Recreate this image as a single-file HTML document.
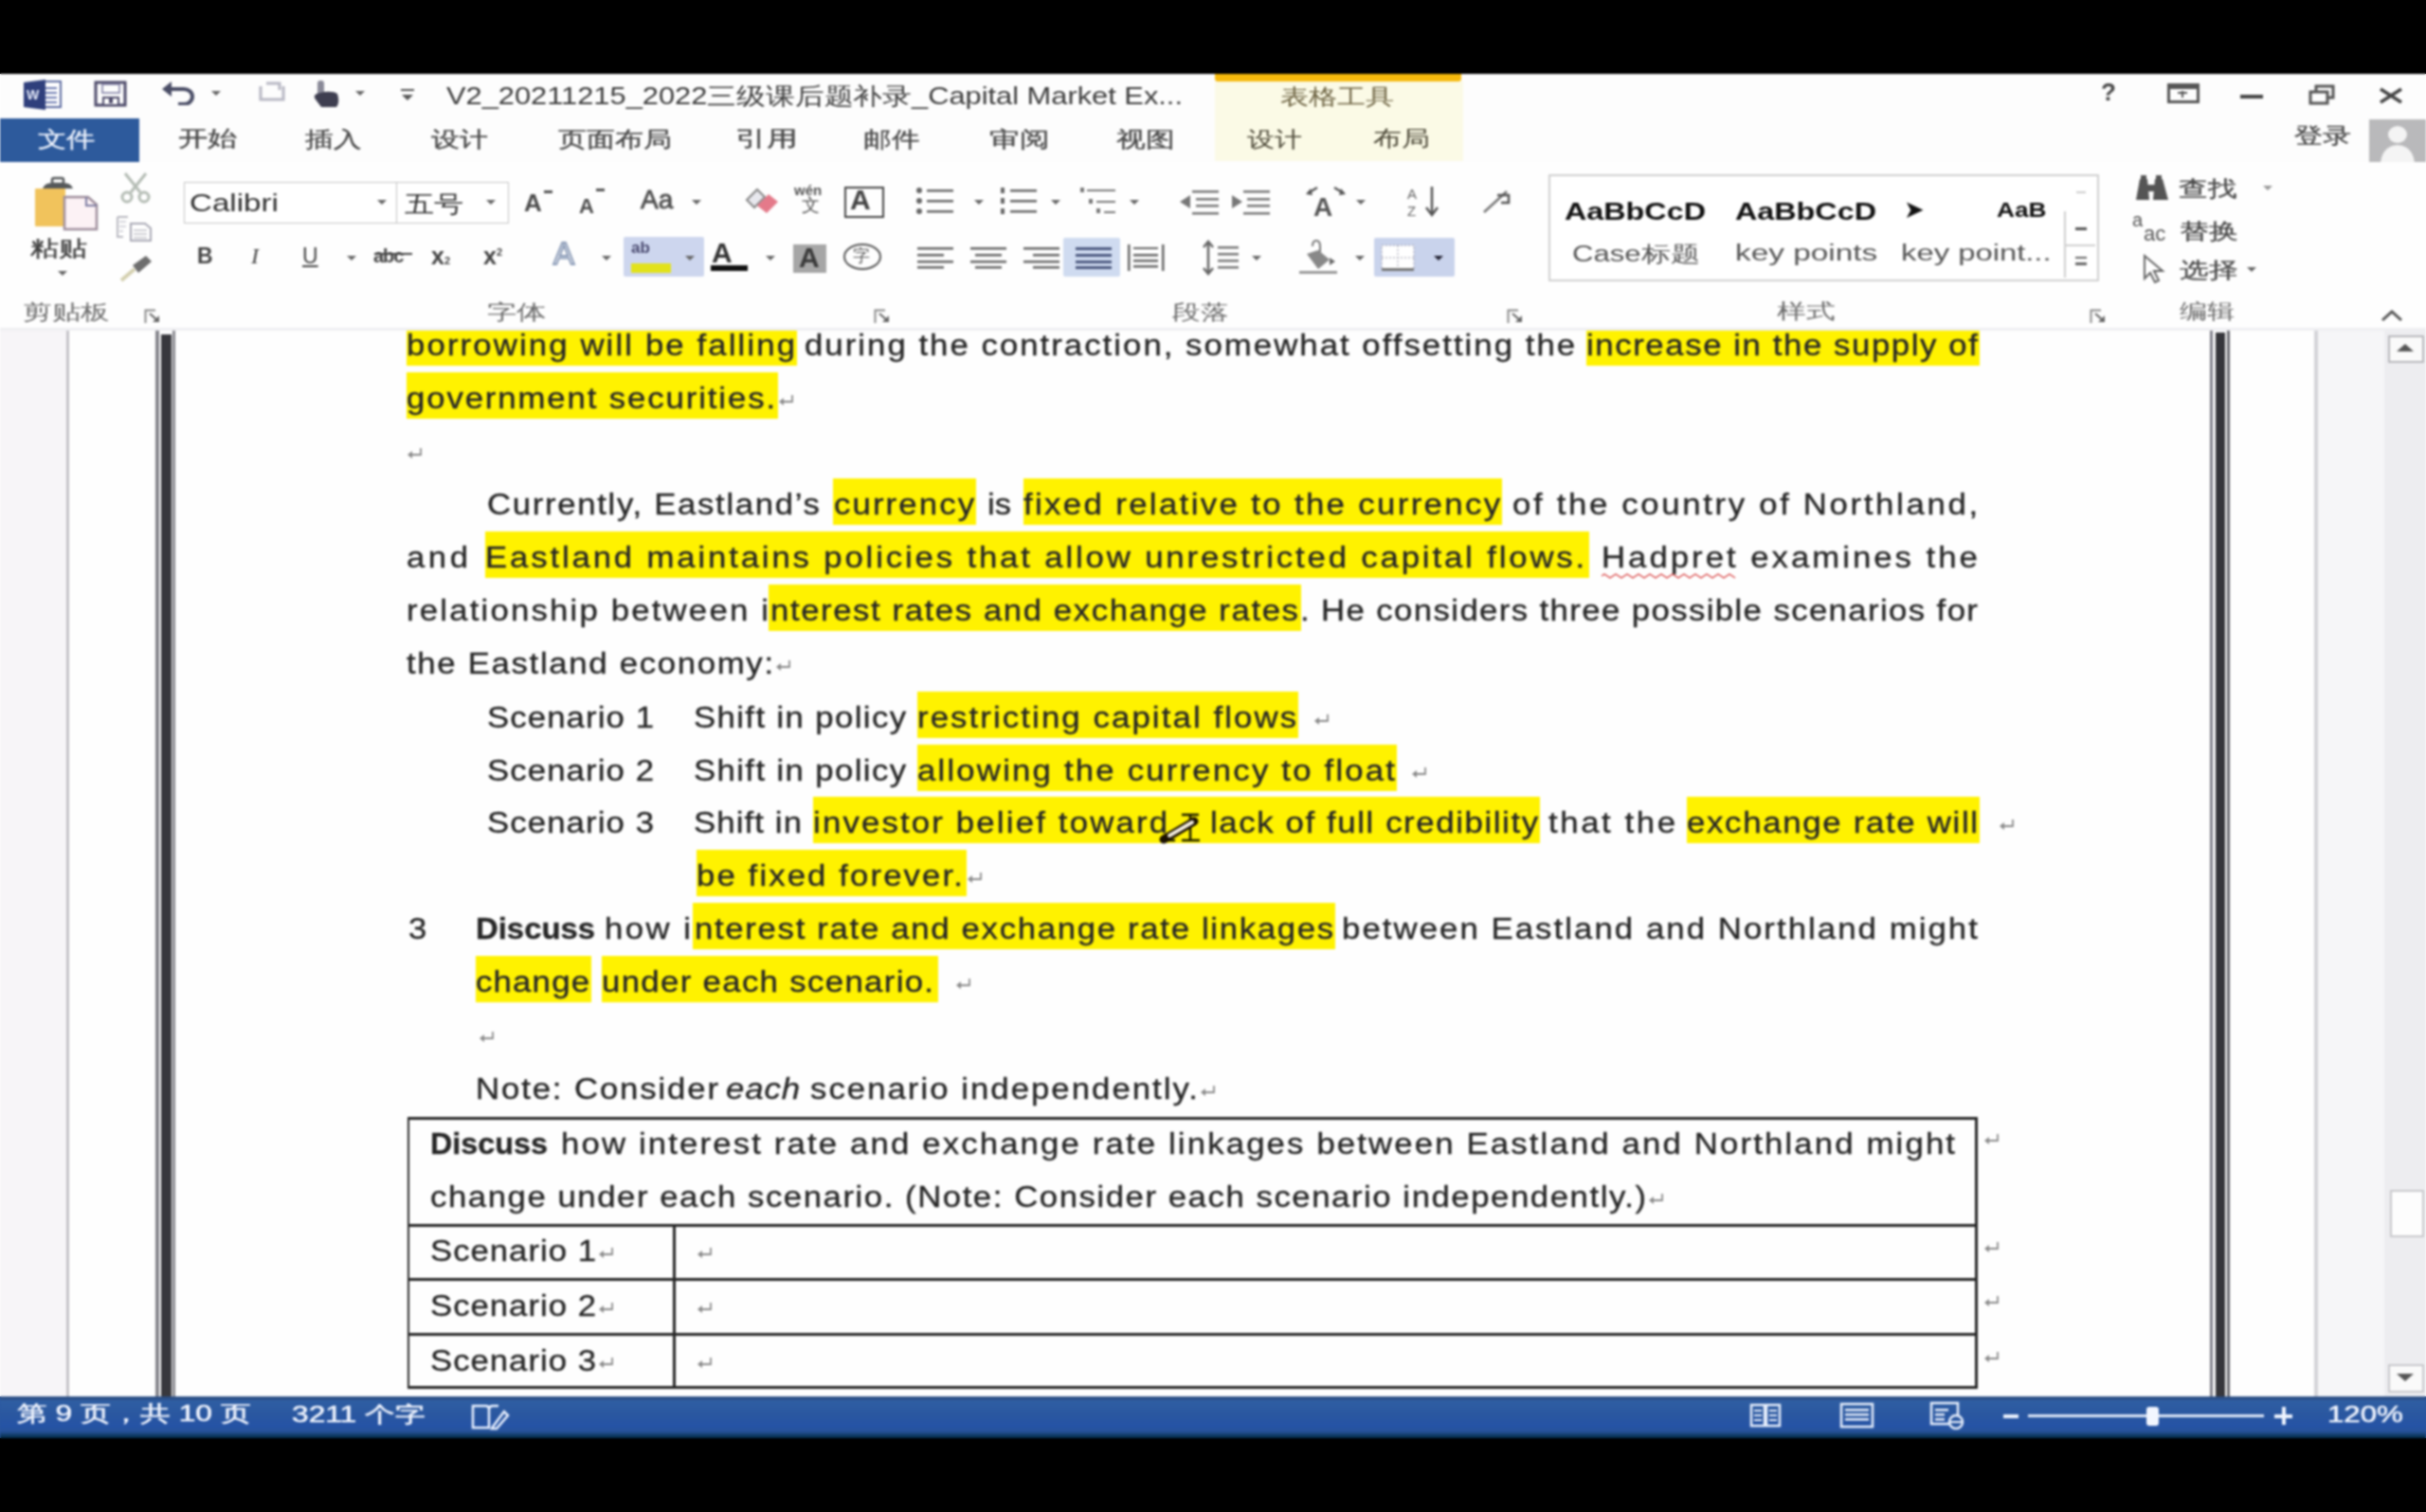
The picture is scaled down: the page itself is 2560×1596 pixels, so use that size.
<!DOCTYPE html>
<html><head><meta charset="utf-8"><style>
*{margin:0;padding:0;box-sizing:content-box}
html,body{width:2560px;height:1596px;overflow:hidden;background:linear-gradient(#000 0,#000 78px,#fff 78px,#fff 1474px,#2a57a0 1474px,#2a57a0 1518px,#000 1518px,#000 1596px)}
body{position:relative;font-family:"Liberation Sans",sans-serif}
.a{position:absolute}
.cn{white-space:nowrap;line-height:36px}
.tab{top:128px;font-size:23px;color:#444;letter-spacing:13px}
.grp{top:311px;font-size:22px;color:#666;letter-spacing:8px}
.launch{top:327px;width:16px;height:12px;border-left:2px solid #999;border-top:2px solid #999}
.launch:after{content:"";position:absolute;left:6px;top:4px;width:8px;height:6px;background:#777;transform:skewX(30deg)}
.dd{width:0;height:0;border-left:5px solid transparent;border-right:5px solid transparent;border-top:5px solid #666;margin-left:1px}
.sty{top:206px;font-size:24px;font-weight:bold;color:#111;line-height:34px;letter-spacing:1.5px}
.st{top:1477px;font-size:24px;color:#eef3ff;line-height:36px;white-space:nowrap}
.hl{height:49px;background:#fff200}
.tx{font-size:31px;line-height:40px;color:#262626;white-space:pre;transform-origin:0 0;-webkit-text-stroke:0.35px #262626}
.pil{width:16px;height:14px;border-right:2px solid #aaa;border-bottom:2px solid #aaa;transform:scale(.8)}
</style></head>
<body>
<div id="wrap" style="position:absolute;left:0;top:0;width:2560px;height:1596px;overflow:hidden;background:#000;filter:blur(1px)">
<!-- title bar -->
<div class="a" style="left:0;top:78px;width:2560px;height:93px;background:#fdfdfd"></div>
<div class="a" style="left:1282px;top:78px;width:260px;height:8px;background:#f6b90c;border-radius:0 0 3px 3px"></div>
<div class="a" style="left:1282px;top:86px;width:262px;height:84px;background:#fbfae6"></div>
<!-- word icon -->
<svg class="a" style="left:24px;top:83px" width="44" height="34" viewBox="0 0 44 34">
 <rect x="18" y="3" width="22" height="27" fill="#fff" stroke="#5b6aa0" stroke-width="2"/>
 <rect x="22" y="9" width="14" height="2" fill="#6b7ab0"/><rect x="22" y="14" width="14" height="2" fill="#6b7ab0"/><rect x="22" y="19" width="14" height="2" fill="#6b7ab0"/><rect x="22" y="24" width="14" height="2" fill="#6b7ab0"/>
 <path d="M1 4 L24 1 L24 33 L1 30 Z" fill="#2f3f7c"/>
 <text x="4" y="22" font-family="Liberation Sans" font-weight="bold" font-size="14" fill="#e8eefc">W</text>
</svg>
<!-- save -->
<svg class="a" style="left:99px;top:85px" width="36" height="28" viewBox="0 0 36 28">
 <path d="M2 2 H33 V26 H2 Z" fill="none" stroke="#4d4a6a" stroke-width="3"/>
 <rect x="9" y="4" width="18" height="9" fill="none" stroke="#7a78a0" stroke-width="1.5"/>
 <rect x="10" y="18" width="16" height="8" fill="#fff" stroke="#4d4a6a" stroke-width="2"/>
 <rect x="16" y="19" width="4" height="5" fill="#4d4a6a"/>
</svg>
<!-- undo -->
<svg class="a" style="left:170px;top:85px" width="40" height="26" viewBox="0 0 40 26">
 <path d="M6 9 H24 A9 8 0 0 1 24 25 H18" fill="none" stroke="#4a4d66" stroke-width="4"/>
 <path d="M1 9 L11 1 L11 17 Z" fill="#4a4d66"/>
</svg>
<div class="a dd" style="left:222px;top:96px"></div>
<!-- redo gray -->
<svg class="a" style="left:271px;top:85px" width="34" height="24" viewBox="0 0 34 24">
 <path d="M4 6 V20 H28 V6" fill="none" stroke="#b8b8c4" stroke-width="3"/><path d="M10 3 H24 L24 10" fill="none" stroke="#b8b8c4" stroke-width="3"/>
</svg>
<!-- touch -->
<svg class="a" style="left:328px;top:83px" width="34" height="32" viewBox="0 0 34 32"><rect x="7" y="2" width="7" height="17" rx="3" fill="#8a8a98"/><path d="M6 16 Q2 18 5 22 L11 30 H27 Q30 26 29 20 L28 16 Q24 13 14 14 Z" fill="#3e3e50"/></svg>
<div class="a dd" style="left:374px;top:96px"></div>
<svg class="a" style="left:421px;top:92px" width="20" height="16"><rect x="2" y="2" width="14" height="2" fill="#555"/><path d="M3 8 H15 L9 14 Z" fill="#555"/></svg>
<!-- window controls -->
<div class="a" style="left:2217px;top:82px;font-size:26px;font-weight:bold;color:#444;line-height:30px">?</div>
<svg class="a" style="left:2287px;top:88px" width="36" height="22"><rect x="1.5" y="1.5" width="31" height="18" fill="none" stroke="#555" stroke-width="3"/><rect x="2" y="2" width="30" height="4" fill="#555"/><path d="M11 10 H21 M16 8 V15" stroke="#555" stroke-width="2"/></svg>
<div class="a" style="left:2364px;top:100px;width:24px;height:4px;background:#444"></div>
<svg class="a" style="left:2436px;top:89px" width="30" height="22"><rect x="2" y="8" width="18" height="12" fill="none" stroke="#555" stroke-width="3"/><path d="M8 8 V2 H26 V14 H20" fill="none" stroke="#555" stroke-width="3"/></svg>
<svg class="a" style="left:2509px;top:92px" width="28" height="18"><path d="M3 2 L25 16 M25 2 L3 16" stroke="#444" stroke-width="3.5"/></svg>
<!-- tabs -->
<div class="a" style="left:0;top:125px;width:147px;height:46px;background:#2d5a9c"></div>
<svg class="a" style="left:2500px;top:126px" width="60" height="46"><rect width="60" height="46" fill="#b9b9bb"/><ellipse cx="30" cy="16" rx="10" ry="9" fill="#f4f4f4"/><path d="M12 46 Q14 28 30 27 Q46 28 48 46 Z" fill="#f4f4f4"/></svg>

<!-- ribbon bg -->
<div class="a" style="left:0;top:171px;width:2560px;height:176px;background:#fefefe"></div>
<div class="a" style="left:0;top:346px;width:2560px;height:3px;background:#efeff2"></div>
<!-- clipboard -->
<svg class="a" style="left:33px;top:183px" width="72" height="62" viewBox="0 0 72 62">
 <rect x="4" y="16" width="32" height="40" rx="1" fill="#f1c35c"/>
 <path d="M12 16 Q14 10 22 10 H34 Q42 10 44 16 Z" fill="#55585a"/><rect x="22" y="5" width="12" height="6" rx="2" fill="none" stroke="#55585a" stroke-width="2.5"/>
 <path d="M35 25 H60 L69 33 V59 H35 Z" fill="#fcf2f5" stroke="#9e8e9c" stroke-width="2.5"/>
 <path d="M58 25 V34 H69" fill="none" stroke="#7a7aa0" stroke-width="2"/>
</svg>
<div class="a dd" style="left:60px;top:286px"></div>
<svg class="a" style="left:124px;top:181px" width="38" height="34"><path d="M8 2 L24 22 M30 2 L14 22" stroke="#b4bcb4" stroke-width="3"/><circle cx="10" cy="27" r="5" fill="none" stroke="#b4bcb4" stroke-width="3"/><circle cx="28" cy="27" r="5" fill="none" stroke="#b4bcb4" stroke-width="3"/></svg>
<svg class="a" style="left:121px;top:226px" width="42" height="30"><path d="M3 3 H14 M3 3 V24 H9" fill="none" stroke="#b8b8c0" stroke-width="2"/><path d="M5 8 H12 M5 13 H12 M5 18 H9" stroke="#c8c8d0" stroke-width="1.5"/><path d="M17 10 H32 L38 15 V28 H17 Z" fill="#fff" stroke="#a8a8b4" stroke-width="2"/><path d="M20 17 H34 M20 21 H34 M20 25 H34" stroke="#c0c0c8" stroke-width="1.5"/></svg>
<svg class="a" style="left:124px;top:268px" width="40" height="30"><path d="M4 28 L18 16" stroke="#d4d0b0" stroke-width="4"/><path d="M16 12 L30 2 L36 8 L22 20 Z" fill="#6e6e6e"/></svg>
<svg class="a" style="left:152px;top:326px" width="20" height="16"><path d="M1.5 15 V1.5 H12" fill="none" stroke="#8a8a8a" stroke-width="2"/><path d="M6 5 L14 12" stroke="#666" stroke-width="2.2"/><path d="M16 14 L9 14 L16 7 Z" fill="#666"/></svg>
<!-- font group -->
<div class="a" style="left:194px;top:192px;width:223px;height:42px;border:1.5px solid #c4c4c4;background:#fff"></div>
<div class="a" style="left:418px;top:192px;width:117px;height:42px;border:1.5px solid #c4c4c4;background:#fff"></div>
<div class="a dd" style="left:397px;top:211px"></div>
<div class="a dd" style="left:512px;top:211px"></div>
<div class="a" style="left:553px;top:199px;font-size:26px;color:#4a4a4a;line-height:30px;font-weight:bold">A</div><div class="a" style="left:574px;top:201px;width:9px;height:3px;background:#555"></div>
<div class="a" style="left:611px;top:205px;font-size:22px;color:#4a4a4a;line-height:26px;font-weight:bold">A</div><div class="a" style="left:629px;top:199px;width:9px;height:3px;background:#555"></div>
<div class="a" style="left:676px;top:195px;font-size:28px;color:#505050;line-height:32px;-webkit-text-stroke:0.8px #505050">Aa</div><div class="a dd" style="left:729px;top:211px"></div>
<svg class="a" style="left:785px;top:197px" width="38" height="32"><path d="M3 14 L14 3 L22 11 L11 22 Z" fill="#e8e8ee" stroke="#888" stroke-width="2"/><path d="M14 20 L26 8 L36 16 L24 28 Z" fill="#e47a8a"/></svg>
<div class="a" style="left:838px;top:193px;font-size:15px;color:#555;line-height:16px;font-weight:bold">wén</div>
<div class="a cn" style="left:846px;top:205px;font-size:19px;color:#555;line-height:24px">文</div>
<div class="a" style="left:891px;top:197px;width:38px;height:29px;border:2.5px solid #444"></div>
<div class="a" style="left:897px;top:193px;font-size:30px;color:#444;line-height:36px;font-weight:bold">A</div>
<div class="a" style="left:208px;top:252px;font-size:23px;font-weight:bold;color:#444;line-height:36px">B</div>
<div class="a" style="left:265px;top:252px;font-size:24px;font-style:italic;color:#444;line-height:36px;font-family:'Liberation Serif',serif">I</div>
<div class="a" style="left:319px;top:252px;font-size:23px;color:#444;line-height:36px;text-decoration:underline">U</div>
<div class="a dd" style="left:365px;top:270px"></div>
<div class="a" style="left:394px;top:253px;font-size:20px;color:#444;line-height:34px;font-weight:bold;letter-spacing:-1px">abc</div>
<div class="a" style="left:395px;top:267px;width:40px;height:2px;background:#444"></div>
<div class="a" style="left:455px;top:254px;font-size:25px;color:#444;line-height:32px;font-weight:bold">x<span style="font-size:11px">2</span></div>
<div class="a" style="left:510px;top:250px;font-size:25px;color:#444;line-height:32px;font-weight:bold">x<span style="font-size:11px;vertical-align:9px">2</span></div>
<div class="a" style="left:584px;top:250px;font-size:33px;color:#fff;line-height:36px;-webkit-text-stroke:2px #8c9cb8">A</div>
<div class="a dd" style="left:634px;top:270px"></div>
<div class="a" style="left:658px;top:250px;width:85px;height:42px;background:#cdd6ee;border-radius:2px"></div>
<div class="a" style="left:666px;top:250px;font-size:17px;color:#4a4a70;line-height:24px;font-weight:bold">ab</div>
<div class="a" style="left:666px;top:278px;width:42px;height:10px;background:#e2e21a"></div>
<div class="a dd" style="left:722px;top:270px"></div>
<div class="a" style="left:751px;top:250px;font-size:30px;color:#333;line-height:34px;font-weight:bold">A</div>
<div class="a" style="left:750px;top:280px;width:39px;height:6px;background:#111"></div>
<div class="a dd" style="left:807px;top:270px"></div>
<div class="a" style="left:837px;top:258px;width:35px;height:30px;background:#a6a6a6"></div>
<div class="a" style="left:843px;top:254px;font-size:30px;color:#3a3a3a;line-height:36px;font-weight:bold">A</div>
<svg class="a" style="left:889px;top:256px" width="42" height="30"><ellipse cx="21" cy="15" rx="19" ry="13" fill="none" stroke="#555" stroke-width="2"/></svg>
<div class="a cn" style="left:900px;top:256px;font-size:18px;color:#555;line-height:28px">字</div>
<svg class="a" style="left:922px;top:326px" width="20" height="16"><path d="M1.5 15 V1.5 H12" fill="none" stroke="#8a8a8a" stroke-width="2"/><path d="M6 5 L14 12" stroke="#666" stroke-width="2.2"/><path d="M16 14 L9 14 L16 7 Z" fill="#666"/></svg>
<!-- paragraph group -->
<svg class="a" style="left:966px;top:197px" width="44" height="32"><g fill="#666"><circle cx="4" cy="4" r="3"/><circle cx="4" cy="15" r="3"/><circle cx="4" cy="26" r="3"/><rect x="12" y="3" width="28" height="2.5"/><rect x="12" y="14" width="28" height="2.5"/><rect x="12" y="25" width="28" height="2.5"/></g></svg>
<div class="a dd" style="left:1027px;top:211px"></div>
<svg class="a" style="left:1054px;top:197px" width="44" height="32"><g fill="#666"><rect x="2" y="1" width="4" height="6"/><rect x="2" y="12" width="4" height="6"/><rect x="2" y="23" width="4" height="6"/><rect x="12" y="3" width="28" height="2.5"/><rect x="12" y="14" width="28" height="2.5"/><rect x="12" y="25" width="28" height="2.5"/></g></svg>
<div class="a dd" style="left:1108px;top:211px"></div>
<svg class="a" style="left:1139px;top:197px" width="44" height="32"><g fill="#777"><rect x="1" y="1" width="4" height="5"/><rect x="8" y="3" width="30" height="2"/><rect x="10" y="13" width="4" height="5"/><rect x="18" y="15" width="20" height="2"/><rect x="18" y="23" width="4" height="5"/><rect x="26" y="26" width="12" height="2"/></g></svg>
<div class="a dd" style="left:1191px;top:211px"></div>
<svg class="a" style="left:1244px;top:199px" width="44" height="30"><g fill="#777"><rect x="14" y="2" width="28" height="2.5"/><rect x="18" y="10" width="24" height="2.5"/><rect x="18" y="17" width="24" height="2.5"/><rect x="14" y="25" width="28" height="2.5"/><path d="M1 14 L12 7 V21 Z"/></g></svg>
<svg class="a" style="left:1298px;top:199px" width="44" height="30"><g fill="#777"><rect x="14" y="2" width="28" height="2.5"/><rect x="18" y="10" width="24" height="2.5"/><rect x="18" y="17" width="24" height="2.5"/><rect x="14" y="25" width="28" height="2.5"/><path d="M13 14 L2 7 V21 Z"/></g></svg>
<svg class="a" style="left:1377px;top:195px" width="44" height="36"><text x="9" y="33" font-family="Liberation Sans" font-weight="bold" font-size="28" fill="#555">A</text><path d="M3 9 L13 3 M31 3 L41 9" stroke="#555" stroke-width="2.5"/><path d="M1 10 L6 4 L8 11 Z M43 10 L38 4 L36 11 Z" fill="#555"/></svg>
<div class="a dd" style="left:1430px;top:211px"></div>
<svg class="a" style="left:1484px;top:195px" width="40" height="36"><text x="1" y="15" font-family="Liberation Sans" font-size="15" fill="#666">A</text><text x="1" y="33" font-family="Liberation Sans" font-size="15" fill="#666">Z</text><path d="M27 2 V30 M21 24 L27 32 L33 24" stroke="#555" stroke-width="2.5" fill="none"/></svg>
<svg class="a" style="left:1562px;top:196px" width="34" height="34"><path d="M4 28 L28 6" stroke="#777" stroke-width="2.5"/><path d="M18 10 H30 V18 H22" stroke="#555" stroke-width="2.5" fill="none"/></svg>
<svg class="a" style="left:966px;top:259px" width="44" height="26"><g fill="#666"><rect x="2" y="2" width="38" height="2.5"/><rect x="2" y="9" width="28" height="2.5"/><rect x="2" y="16" width="38" height="2.5"/><rect x="2" y="22" width="28" height="2.5"/></g></svg>
<svg class="a" style="left:1022px;top:259px" width="44" height="26"><g fill="#666"><rect x="2" y="2" width="38" height="2.5"/><rect x="7" y="9" width="28" height="2.5"/><rect x="2" y="16" width="38" height="2.5"/><rect x="7" y="22" width="28" height="2.5"/></g></svg>
<svg class="a" style="left:1078px;top:259px" width="44" height="26"><g fill="#666"><rect x="2" y="2" width="38" height="2.5"/><rect x="12" y="9" width="28" height="2.5"/><rect x="2" y="16" width="38" height="2.5"/><rect x="12" y="22" width="28" height="2.5"/></g></svg>
<div class="a" style="left:1122px;top:251px;width:60px;height:41px;background:#cfdbf0;border-radius:2px"></div>
<svg class="a" style="left:1133px;top:259px" width="44" height="26"><g fill="#4d5a80"><rect x="2" y="2" width="38" height="3"/><rect x="2" y="9" width="38" height="3"/><rect x="2" y="16" width="38" height="3"/><rect x="2" y="22" width="38" height="3"/></g></svg>
<svg class="a" style="left:1188px;top:256px" width="44" height="32"><g fill="#666"><rect x="2" y="2" width="2.5" height="28"/><rect x="38" y="2" width="2.5" height="28"/><rect x="8" y="12" width="26" height="2.5"/><rect x="8" y="18" width="26" height="2.5"/><rect x="8" y="24" width="26" height="2.5"/><path d="M8 6 H34" stroke="#666" stroke-width="2"/></g></svg>
<svg class="a" style="left:1267px;top:252px" width="42" height="40"><path d="M8 4 V36 M3 9 L8 3 L13 9 M3 31 L8 37 L13 31" stroke="#666" stroke-width="2.5" fill="none"/><g fill="#777"><rect x="18" y="8" width="22" height="2.5"/><rect x="18" y="15" width="22" height="2.5"/><rect x="18" y="22" width="22" height="2.5"/><rect x="18" y="29" width="22" height="2.5"/></g></svg>
<div class="a dd" style="left:1320px;top:270px"></div>
<svg class="a" style="left:1369px;top:252px" width="48" height="40"><path d="M16 8 Q16 2 20 2 Q24 2 24 8 V14" stroke="#777" stroke-width="2" fill="none"/><path d="M10 16 L22 12 L34 22 L22 32 Z" fill="#888"/><path d="M34 20 L40 24 L34 28 Z" fill="#666"/><rect x="2" y="34" width="40" height="3" fill="#999"/></svg>
<div class="a dd" style="left:1429px;top:270px"></div>
<div class="a" style="left:1450px;top:251px;width:85px;height:41px;background:#c9d3ec;border-radius:2px"></div>
<svg class="a" style="left:1456px;top:257px" width="40" height="30"><rect x="2" y="2" width="34" height="26" fill="#fff" stroke="#99a" stroke-width="1" stroke-dasharray="2 2"/><path d="M19 2 V28 M2 15 H36" stroke="#99a" stroke-dasharray="2 2"/><rect x="2" y="26" width="34" height="3" fill="#777"/></svg>
<div class="a dd" style="left:1512px;top:270px;border-top-color:#223"></div>
<svg class="a" style="left:1590px;top:326px" width="20" height="16"><path d="M1.5 15 V1.5 H12" fill="none" stroke="#8a8a8a" stroke-width="2"/><path d="M6 5 L14 12" stroke="#666" stroke-width="2.2"/><path d="M16 14 L9 14 L16 7 Z" fill="#666"/></svg>
<!-- styles gallery -->
<div class="a" style="left:1634px;top:184px;width:577px;height:109px;border:2px solid #cfcfcf;background:#fff"></div>
<div class="a" style="left:2178px;top:223px;width:33px;height:70px;border-left:2px solid #cfcfcf"></div>
<div class="a" style="left:2178px;top:258px;width:33px;height:2px;background:#cfcfcf"></div>
<div class="a" style="left:2191px;top:202px;width:10px;height:2px;background:#ccc"></div>
<div class="a" style="left:2190px;top:240px;width:12px;height:3px;background:#555"></div>
<div class="a" style="left:2190px;top:271px;width:12px;height:2px;background:#666"></div>
<div class="a" style="left:2190px;top:277px;width:12px;height:3px;background:#666"></div>
<div class="a" style="left:2009px;top:204px;font-size:26px;color:#111;line-height:34px">&#10148;</div>
<svg class="a" style="left:2205px;top:326px" width="20" height="16"><path d="M1.5 15 V1.5 H12" fill="none" stroke="#8a8a8a" stroke-width="2"/><path d="M6 5 L14 12" stroke="#666" stroke-width="2.2"/><path d="M16 14 L9 14 L16 7 Z" fill="#666"/></svg>
<!-- editing -->
<svg class="a" style="left:2250px;top:183px" width="42" height="30"><g fill="#555"><path d="M4 28 L8 6 H16 L18 28 Z"/><path d="M22 28 L24 6 H32 L38 28 Z"/><rect x="14" y="12" width="12" height="7"/><rect x="9" y="2" width="6" height="6"/><rect x="25" y="2" width="6" height="6"/></g></svg>
<div class="a dd" style="left:2387px;top:196px;border-top-color:#999"></div>
<div class="a" style="left:2250px;top:222px;font-size:20px;color:#555;line-height:20px">a</div>
<div class="a" style="left:2262px;top:236px;font-size:22px;color:#555;line-height:22px">ac</div>
<svg class="a" style="left:2260px;top:268px" width="28" height="32"><path d="M3 2 V26 L9 20 L14 30 L18 28 L13 18 H22 Z" fill="#fff" stroke="#666" stroke-width="2"/></svg>
<div class="a dd" style="left:2370px;top:282px"></div>
<svg class="a" style="left:2511px;top:325px" width="26" height="16"><path d="M3 13 L13 4 L23 13" stroke="#555" stroke-width="3" fill="none"/></svg>

<!-- document area chrome -->
<div class="a" style="left:0;top:349px;width:2560px;height:1125px;background:#fefefe"></div>
<div class="a" style="left:0;top:349px;width:70px;height:1125px;background:#f7f5f8"></div>
<div class="a" style="left:70px;top:349px;width:3px;height:1125px;background:#c4c2c8"></div>
<div class="a" style="left:164px;top:349px;width:4px;height:1125px;background:#85858c"></div>
<div class="a" style="left:170px;top:353px;width:11px;height:1121px;background:#38383d"></div>
<div class="a" style="left:182px;top:349px;width:3px;height:1125px;background:#8a8a90"></div>
<div class="a" style="left:2332px;top:349px;width:3px;height:1125px;background:#80808a"></div>
<div class="a" style="left:2338px;top:351px;width:10px;height:1123px;background:#36363b"></div>
<div class="a" style="left:2350px;top:349px;width:3px;height:1125px;background:#6a6a70"></div>
<div class="a" style="left:2442px;top:349px;width:4px;height:1125px;background:#d4d4d8"></div>
<div class="a" style="left:2446px;top:349px;width:114px;height:1125px;background:#f6f6f8"></div>
<div class="a" style="left:2516px;top:349px;width:44px;height:1125px;background:#ededf0"></div>
<div class="a" style="left:2520px;top:354px;width:34px;height:25px;border:2px solid #b8b8bc;background:#fafafa"></div>
<svg class="a" style="left:2528px;top:362px" width="20" height="10"><path d="M1 9 L10 1 L19 9 Z" fill="#555"/></svg>
<div class="a" style="left:2522px;top:1256px;width:32px;height:46px;border:2px solid #c8c8cc;background:#fdfdfd"></div>
<div class="a" style="left:2520px;top:1440px;width:34px;height:26px;border:2px solid #c8c8cc;background:#fafafa"></div>
<svg class="a" style="left:2528px;top:1449px" width="20" height="10"><path d="M1 1 L10 9 L19 1 Z" fill="#555"/></svg>
<!-- status bar -->
<div class="a" style="left:0;top:1474px;width:2560px;height:44px;background:linear-gradient(#2b4f86 0,#2b4f86 3px,#2f5ea3 4px,#2a57a0 20px,#2553a6 31px,#27539a 37px,#0b3558 42px,#002d50 44px)"></div>
<svg class="a" style="left:496px;top:1480px" width="42" height="30"><path d="M3 4 H17 Q20 4 20 8 V27 H3 Z M20 8 Q20 4 24 4 H30" fill="none" stroke="#e8f0ff" stroke-width="2.5"/><path d="M24 26 L36 10 L40 14 L28 28 H23 Z" fill="none" stroke="#e8f0ff" stroke-width="2.5"/></svg>
<svg class="a" style="left:1846px;top:1480px" width="36" height="28"><g fill="none" stroke="#e6eefc" stroke-width="2.5"><path d="M2 3 H16 V25 H2 Z M18 3 H32 V25 H18 Z"/></g><g fill="#e6eefc"><rect x="5" y="8" width="8" height="2"/><rect x="5" y="13" width="8" height="2"/><rect x="5" y="18" width="8" height="2"/><rect x="21" y="8" width="8" height="2"/><rect x="21" y="13" width="8" height="2"/><rect x="21" y="18" width="8" height="2"/></g></svg>
<svg class="a" style="left:1941px;top:1480px" width="38" height="28"><rect x="2" y="2" width="33" height="24" fill="none" stroke="#e6eefc" stroke-width="2.5"/><g fill="#e6eefc"><rect x="6" y="7" width="25" height="2.5"/><rect x="6" y="12" width="25" height="2.5"/><rect x="6" y="17" width="25" height="2.5"/></g></svg>
<svg class="a" style="left:2036px;top:1479px" width="40" height="30"><rect x="2" y="2" width="28" height="22" fill="none" stroke="#e6eefc" stroke-width="2.5"/><g fill="#e6eefc"><rect x="6" y="8" width="14" height="2.5"/><rect x="6" y="13" width="10" height="2.5"/><rect x="6" y="18" width="10" height="2.5"/></g><circle cx="28" cy="22" r="7" fill="#2a57a0" stroke="#e6eefc" stroke-width="2.5"/><path d="M22 22 H34" stroke="#e6eefc" stroke-width="2"/></svg>
<div class="a" style="left:2114px;top:1493px;width:16px;height:4px;background:#eef4ff"></div>
<div class="a" style="left:2140px;top:1493px;width:249px;height:3px;background:#dfe8f8"></div>
<div class="a" style="left:2265px;top:1485px;width:13px;height:20px;background:#f2f6ff;border-radius:3px"></div>
<div class="a" style="left:2400px;top:1493px;width:19px;height:4px;background:#eef4ff"></div>
<div class="a" style="left:2408px;top:1485px;width:4px;height:19px;background:#eef4ff"></div>

<!-- ui text -->
<div class="a" style="left:471.0px;top:83.0px;font-size:25px;line-height:37px;white-space:pre;transform-origin:0 0;transform:scaleX(1.2325);color:#3c3c3c">V2_20211215_2022三级课后题补录_Capital Market Ex...</div>
<div class="a" style="left:1350.7px;top:85.0px;font-size:23px;line-height:34px;white-space:pre;transform-origin:0 0;transform:scaleX(1.3111);color:#6e6444">表格工具</div>
<div class="a" style="left:39.7px;top:130.0px;font-size:23px;line-height:34px;white-space:pre;transform-origin:0 0;transform:scaleX(1.3182);color:#f0f5ff;-webkit-text-stroke:0.3px #f0f5ff">文件</div>
<div class="a" style="left:187.6px;top:129.0px;font-size:23px;line-height:34px;white-space:pre;transform-origin:0 0;transform:scaleX(1.3636);color:#474747;-webkit-text-stroke:0.3px #474747">开始</div>
<div class="a" style="left:322.0px;top:130.0px;font-size:23px;line-height:34px;white-space:pre;transform-origin:0 0;transform:scaleX(1.2889);color:#474747;-webkit-text-stroke:0.3px #474747">插入</div>
<div class="a" style="left:455.0px;top:130.0px;font-size:23px;line-height:34px;white-space:pre;transform-origin:0 0;transform:scaleX(1.3043);color:#474747;-webkit-text-stroke:0.3px #474747">设计</div>
<div class="a" style="left:589.0px;top:130.0px;font-size:23px;line-height:34px;white-space:pre;transform-origin:0 0;transform:scaleX(1.3000);color:#474747;-webkit-text-stroke:0.3px #474747">页面布局</div>
<div class="a" style="left:776.1px;top:129.0px;font-size:23px;line-height:34px;white-space:pre;transform-origin:0 0;transform:scaleX(1.4286);color:#474747;-webkit-text-stroke:0.3px #474747">引用</div>
<div class="a" style="left:910.7px;top:130.0px;font-size:23px;line-height:34px;white-space:pre;transform-origin:0 0;transform:scaleX(1.2889);color:#474747;-webkit-text-stroke:0.3px #474747">邮件</div>
<div class="a" style="left:1043.6px;top:130.0px;font-size:23px;line-height:34px;white-space:pre;transform-origin:0 0;transform:scaleX(1.3721);color:#474747;-webkit-text-stroke:0.3px #474747">审阅</div>
<div class="a" style="left:1178.0px;top:130.0px;font-size:23px;line-height:34px;white-space:pre;transform-origin:0 0;transform:scaleX(1.3409);color:#474747;-webkit-text-stroke:0.3px #474747">视图</div>
<div class="a" style="left:1316.0px;top:130.0px;font-size:23px;line-height:34px;white-space:pre;transform-origin:0 0;transform:scaleX(1.2667);color:#4a4636">设计</div>
<div class="a" style="left:1448.7px;top:129.0px;font-size:23px;line-height:34px;white-space:pre;transform-origin:0 0;transform:scaleX(1.3023);color:#4a4636">布局</div>
<div class="a" style="left:2421.0px;top:126.0px;font-size:23px;line-height:34px;white-space:pre;transform-origin:0 0;transform:scaleX(1.3111);color:#474747;-webkit-text-stroke:0.3px #474747">登录</div>
<div class="a" style="left:32.0px;top:245.0px;font-size:23px;line-height:34px;white-space:pre;transform-origin:0 0;transform:scaleX(1.3043);color:#3e3e3e;-webkit-text-stroke:0.4px #3e3e3e">粘贴</div>
<div class="a" style="left:23.6px;top:313.0px;font-size:22px;line-height:33px;white-space:pre;transform-origin:0 0;transform:scaleX(1.3906);color:#6a6a6a">剪贴板</div>
<div class="a" style="left:513.6px;top:313.0px;font-size:22px;line-height:33px;white-space:pre;transform-origin:0 0;transform:scaleX(1.4286);color:#6a6a6a">字体</div>
<div class="a" style="left:1237.0px;top:313.0px;font-size:22px;line-height:33px;white-space:pre;transform-origin:0 0;transform:scaleX(1.3488);color:#6a6a6a">段落</div>
<div class="a" style="left:1875.0px;top:312.0px;font-size:22px;line-height:33px;white-space:pre;transform-origin:0 0;transform:scaleX(1.3953);color:#6a6a6a">样式</div>
<div class="a" style="left:2300.0px;top:312.0px;font-size:22px;line-height:33px;white-space:pre;transform-origin:0 0;transform:scaleX(1.3256);color:#6a6a6a">编辑</div>
<div class="a" style="left:199.7px;top:196.0px;font-size:25px;line-height:37px;white-space:pre;transform-origin:0 0;transform:scaleX(1.3235);color:#2e2e2e">Calibri</div>
<div class="a" style="left:427.0px;top:197.0px;font-size:25px;line-height:37px;white-space:pre;transform-origin:0 0;transform:scaleX(1.2449);color:#2e2e2e">五号</div>
<div class="a" style="left:1650.7px;top:205.0px;font-size:25px;line-height:37px;white-space:pre;transform-origin:0 0;transform:scaleX(1.2920);color:#111;font-weight:bold">AaBbCcD</div>
<div class="a" style="left:1830.7px;top:205.0px;font-size:25px;line-height:37px;white-space:pre;transform-origin:0 0;transform:scaleX(1.2920);color:#111;font-weight:bold">AaBbCcD</div>
<div class="a" style="left:2106.8px;top:205.0px;font-size:22px;line-height:33px;white-space:pre;transform-origin:0 0;transform:scaleX(1.1905);color:#111;font-weight:bold">AaB</div>
<div class="a" style="left:1658.6px;top:251.0px;font-size:23px;line-height:34px;white-space:pre;transform-origin:0 0;transform:scaleX(1.3505);color:#555">Case标题</div>
<div class="a" style="left:1830.5px;top:250.0px;font-size:23px;line-height:34px;white-space:pre;transform-origin:0 0;transform:scaleX(1.4510);color:#555">key points</div>
<div class="a" style="left:2005.6px;top:250.0px;font-size:23px;line-height:34px;white-space:pre;transform-origin:0 0;transform:scaleX(1.4259);color:#555">key point...</div>
<div class="a" style="left:2298.7px;top:182.0px;font-size:23px;line-height:34px;white-space:pre;transform-origin:0 0;transform:scaleX(1.3333);color:#474747;-webkit-text-stroke:0.3px #474747">查找</div>
<div class="a" style="left:2299.7px;top:227.0px;font-size:23px;line-height:34px;white-space:pre;transform-origin:0 0;transform:scaleX(1.3409);color:#474747;-webkit-text-stroke:0.3px #474747">替换</div>
<div class="a" style="left:2300.0px;top:268.0px;font-size:23px;line-height:34px;white-space:pre;transform-origin:0 0;transform:scaleX(1.3333);color:#474747;-webkit-text-stroke:0.3px #474747">选择</div>
<div class="a" style="left:17.6px;top:1475.0px;font-size:23px;line-height:34px;white-space:pre;transform-origin:0 0;transform:scaleX(1.3771);color:#f2f6ff;-webkit-text-stroke:0.5px #f2f6ff">第 9 页，共 10 页</div>
<div class="a" style="left:307.6px;top:1476.0px;font-size:23px;line-height:34px;white-space:pre;transform-origin:0 0;transform:scaleX(1.3800);color:#f2f6ff;-webkit-text-stroke:0.5px #f2f6ff">3211 个字</div>
<div class="a" style="left:2456.3px;top:1476.0px;font-size:23px;line-height:34px;white-space:pre;transform-origin:0 0;transform:scaleX(1.3571);color:#f2f6ff;-webkit-text-stroke:0.5px #f2f6ff">120%</div>
<!-- document content -->
<div class="a" style="left:0;top:349px;width:2560px;height:1125px;overflow:hidden"><div class="a" style="left:0;top:-349px;width:2560px;height:1596px">
<div class="a hl" style="left:429px;top:337px;width:412px"></div>
<div class="a hl" style="left:1674px;top:337px;width:415px"></div>
<div class="a hl" style="left:429px;top:393px;width:392px"></div>
<div class="a hl" style="left:879px;top:505px;width:151px"></div>
<div class="a hl" style="left:1080px;top:505px;width:505px"></div>
<div class="a hl" style="left:512px;top:561px;width:1165px"></div>
<div class="a hl" style="left:811px;top:617px;width:562px"></div>
<div class="a hl" style="left:968px;top:730px;width:402px"></div>
<div class="a hl" style="left:968px;top:786px;width:506px"></div>
<div class="a hl" style="left:858px;top:841px;width:767px"></div>
<div class="a hl" style="left:1780px;top:841px;width:309px"></div>
<div class="a hl" style="left:735px;top:897px;width:285px"></div>
<div class="a hl" style="left:731px;top:953px;width:678px"></div>
<div class="a hl" style="left:502px;top:1009px;width:122px"></div>
<div class="a hl" style="left:635px;top:1009px;width:355px"></div>
<div class="a tx" style="left:429px;top:344.8px;letter-spacing:1.90px;transform:scaleX(1.120);">borrowing will be falling</div>
<div class="a tx" style="left:849px;top:344.8px;letter-spacing:1.82px;transform:scaleX(1.120);">during the contraction, somewhat offsetting the</div>
<div class="a tx" style="left:1674px;top:344.8px;letter-spacing:1.43px;transform:scaleX(1.120);">increase in the supply of</div>
<div class="a tx" style="left:429px;top:400.8px;letter-spacing:1.69px;transform:scaleX(1.120);">government securities.</div>
<div class="a tx" style="left:514px;top:512.8px;letter-spacing:1.51px;transform:scaleX(1.120);">Currently, Eastland’s</div>
<div class="a tx" style="left:880px;top:512.8px;letter-spacing:1.90px;transform:scaleX(1.120);">currency</div>
<div class="a tx" style="left:1042px;top:512.8px;letter-spacing:0.00px;transform:scaleX(1.117);">is</div>
<div class="a tx" style="left:1080px;top:512.8px;letter-spacing:2.12px;transform:scaleX(1.120);">fixed relative to the currency</div>
<div class="a tx" style="left:1596px;top:512.8px;letter-spacing:2.39px;transform:scaleX(1.120);">of the country of Northland,</div>
<div class="a tx" style="left:429px;top:568.8px;letter-spacing:3.15px;transform:scaleX(1.120);">and</div>
<div class="a tx" style="left:512px;top:568.8px;letter-spacing:2.55px;transform:scaleX(1.120);">Eastland maintains policies that allow unrestricted capital flows.</div>
<div class="a tx" style="left:1690px;top:568.8px;letter-spacing:2.69px;transform:scaleX(1.120);">Hadpret examines the</div>
<div class="a tx" style="left:429px;top:624.8px;letter-spacing:1.96px;transform:scaleX(1.120);">relationship between i</div>
<div class="a tx" style="left:813px;top:624.8px;letter-spacing:1.42px;transform:scaleX(1.120);">nterest rates and exchange rates</div>
<div class="a tx" style="left:1372px;top:624.8px;letter-spacing:1.25px;transform:scaleX(1.120);">. He considers three possible scenarios for</div>
<div class="a tx" style="left:429px;top:680.8px;letter-spacing:1.51px;transform:scaleX(1.120);">the Eastland economy:</div>
<div class="a tx" style="left:514px;top:737.8px;letter-spacing:0.99px;transform:scaleX(1.120);">Scenario 1</div>
<div class="a tx" style="left:732px;top:737.8px;letter-spacing:1.24px;transform:scaleX(1.120);">Shift in policy</div>
<div class="a tx" style="left:968px;top:737.8px;letter-spacing:1.89px;transform:scaleX(1.120);">restricting capital flows</div>
<div class="a tx" style="left:514px;top:793.8px;letter-spacing:0.99px;transform:scaleX(1.120);">Scenario 2</div>
<div class="a tx" style="left:732px;top:793.8px;letter-spacing:1.24px;transform:scaleX(1.120);">Shift in policy</div>
<div class="a tx" style="left:968px;top:793.8px;letter-spacing:1.97px;transform:scaleX(1.120);">allowing the currency to float</div>
<div class="a tx" style="left:514px;top:848.8px;letter-spacing:0.99px;transform:scaleX(1.120);">Scenario 3</div>
<div class="a tx" style="left:732px;top:848.8px;letter-spacing:1.00px;transform:scaleX(1.120);">Shift in</div>
<div class="a tx" style="left:858px;top:848.8px;letter-spacing:1.95px;transform:scaleX(1.120);">investor belief toward</div>
<div class="a tx" style="left:1277px;top:848.8px;letter-spacing:1.45px;transform:scaleX(1.120);">lack of full credibility</div>
<div class="a tx" style="left:1634px;top:848.8px;letter-spacing:2.32px;transform:scaleX(1.120);">that the</div>
<div class="a tx" style="left:1780px;top:848.8px;letter-spacing:1.53px;transform:scaleX(1.120);">exchange rate will</div>
<div class="a tx" style="left:735px;top:904.8px;letter-spacing:1.89px;transform:scaleX(1.120);">be fixed forever.</div>
<div class="a tx" style="left:431px;top:960.8px;letter-spacing:0.00px;transform:scaleX(1.120);">3</div>
<div class="a tx" style="left:502px;top:960.8px;letter-spacing:0.00px;transform:scaleX(1.060);font-weight:bold;">Discuss</div>
<div class="a tx" style="left:638px;top:960.8px;letter-spacing:2.22px;transform:scaleX(1.120);">how i</div>
<div class="a tx" style="left:733px;top:960.8px;letter-spacing:1.51px;transform:scaleX(1.120);">nterest rate and exchange rate linkages</div>
<div class="a tx" style="left:1416px;top:960.8px;letter-spacing:1.85px;transform:scaleX(1.120);">between Eastland and Northland might</div>
<div class="a tx" style="left:502px;top:1016.8px;letter-spacing:1.08px;transform:scaleX(1.120);">change</div>
<div class="a tx" style="left:635px;top:1016.8px;letter-spacing:1.21px;transform:scaleX(1.120);">under each scenario.</div>
<div class="a tx" style="left:502px;top:1129.8px;letter-spacing:1.68px;transform:scaleX(1.120);">Note: Consider</div>
<div class="a tx" style="left:766px;top:1129.8px;letter-spacing:0.80px;transform:scaleX(1.120);font-style:italic;">each</div>
<div class="a tx" style="left:855px;top:1129.8px;letter-spacing:1.82px;transform:scaleX(1.120);">scenario independently.</div>
<div class="a tx" style="left:454px;top:1187.8px;letter-spacing:0.00px;transform:scaleX(1.043);font-weight:bold;">Discuss</div>
<div class="a tx" style="left:592px;top:1187.8px;letter-spacing:1.92px;transform:scaleX(1.120);">how interest rate and exchange rate linkages between Eastland and Northland might</div>
<div class="a tx" style="left:454px;top:1243.8px;letter-spacing:1.39px;transform:scaleX(1.120);">change under each scenario. (Note: Consider each scenario independently.)</div>
<div class="a tx" style="left:454px;top:1300.8px;letter-spacing:0.89px;transform:scaleX(1.120);">Scenario 1</div>
<div class="a tx" style="left:454px;top:1358.8px;letter-spacing:0.89px;transform:scaleX(1.120);">Scenario 2</div>
<div class="a tx" style="left:454px;top:1416.8px;letter-spacing:0.89px;transform:scaleX(1.120);">Scenario 3</div>
<svg class="a" style="left:821px;top:416px" width="18" height="14" viewBox="0 0 18 14"><path d="M15 1 V8 H4" fill="none" stroke="#8a8a8a" stroke-width="1.8"/><path d="M1 8 L6 4 V12 Z" fill="#8a8a8a"/></svg>
<svg class="a" style="left:429px;top:472px" width="18" height="14" viewBox="0 0 18 14"><path d="M15 1 V8 H4" fill="none" stroke="#8a8a8a" stroke-width="1.8"/><path d="M1 8 L6 4 V12 Z" fill="#8a8a8a"/></svg>
<svg class="a" style="left:818px;top:696px" width="18" height="14" viewBox="0 0 18 14"><path d="M15 1 V8 H4" fill="none" stroke="#8a8a8a" stroke-width="1.8"/><path d="M1 8 L6 4 V12 Z" fill="#8a8a8a"/></svg>
<svg class="a" style="left:1386px;top:753px" width="18" height="14" viewBox="0 0 18 14"><path d="M15 1 V8 H4" fill="none" stroke="#8a8a8a" stroke-width="1.8"/><path d="M1 8 L6 4 V12 Z" fill="#8a8a8a"/></svg>
<svg class="a" style="left:1489px;top:809px" width="18" height="14" viewBox="0 0 18 14"><path d="M15 1 V8 H4" fill="none" stroke="#8a8a8a" stroke-width="1.8"/><path d="M1 8 L6 4 V12 Z" fill="#8a8a8a"/></svg>
<svg class="a" style="left:2109px;top:864px" width="18" height="14" viewBox="0 0 18 14"><path d="M15 1 V8 H4" fill="none" stroke="#8a8a8a" stroke-width="1.8"/><path d="M1 8 L6 4 V12 Z" fill="#8a8a8a"/></svg>
<svg class="a" style="left:1020px;top:920px" width="18" height="14" viewBox="0 0 18 14"><path d="M15 1 V8 H4" fill="none" stroke="#8a8a8a" stroke-width="1.8"/><path d="M1 8 L6 4 V12 Z" fill="#8a8a8a"/></svg>
<svg class="a" style="left:1008px;top:1032px" width="18" height="14" viewBox="0 0 18 14"><path d="M15 1 V8 H4" fill="none" stroke="#8a8a8a" stroke-width="1.8"/><path d="M1 8 L6 4 V12 Z" fill="#8a8a8a"/></svg>
<svg class="a" style="left:505px;top:1088px" width="18" height="14" viewBox="0 0 18 14"><path d="M15 1 V8 H4" fill="none" stroke="#8a8a8a" stroke-width="1.8"/><path d="M1 8 L6 4 V12 Z" fill="#8a8a8a"/></svg>
<svg class="a" style="left:1266px;top:1145px" width="18" height="14" viewBox="0 0 18 14"><path d="M15 1 V8 H4" fill="none" stroke="#8a8a8a" stroke-width="1.8"/><path d="M1 8 L6 4 V12 Z" fill="#8a8a8a"/></svg>
<svg class="a" style="left:2093px;top:1196px" width="18" height="14" viewBox="0 0 18 14"><path d="M15 1 V8 H4" fill="none" stroke="#8a8a8a" stroke-width="1.8"/><path d="M1 8 L6 4 V12 Z" fill="#8a8a8a"/></svg>
<svg class="a" style="left:1739px;top:1259px" width="18" height="14" viewBox="0 0 18 14"><path d="M15 1 V8 H4" fill="none" stroke="#8a8a8a" stroke-width="1.8"/><path d="M1 8 L6 4 V12 Z" fill="#8a8a8a"/></svg>
<svg class="a" style="left:631px;top:1316px" width="18" height="14" viewBox="0 0 18 14"><path d="M15 1 V8 H4" fill="none" stroke="#8a8a8a" stroke-width="1.8"/><path d="M1 8 L6 4 V12 Z" fill="#8a8a8a"/></svg>
<svg class="a" style="left:631px;top:1374px" width="18" height="14" viewBox="0 0 18 14"><path d="M15 1 V8 H4" fill="none" stroke="#8a8a8a" stroke-width="1.8"/><path d="M1 8 L6 4 V12 Z" fill="#8a8a8a"/></svg>
<svg class="a" style="left:631px;top:1432px" width="18" height="14" viewBox="0 0 18 14"><path d="M15 1 V8 H4" fill="none" stroke="#8a8a8a" stroke-width="1.8"/><path d="M1 8 L6 4 V12 Z" fill="#8a8a8a"/></svg>
<svg class="a" style="left:735px;top:1316px" width="18" height="14" viewBox="0 0 18 14"><path d="M15 1 V8 H4" fill="none" stroke="#8a8a8a" stroke-width="1.8"/><path d="M1 8 L6 4 V12 Z" fill="#8a8a8a"/></svg>
<svg class="a" style="left:735px;top:1374px" width="18" height="14" viewBox="0 0 18 14"><path d="M15 1 V8 H4" fill="none" stroke="#8a8a8a" stroke-width="1.8"/><path d="M1 8 L6 4 V12 Z" fill="#8a8a8a"/></svg>
<svg class="a" style="left:735px;top:1432px" width="18" height="14" viewBox="0 0 18 14"><path d="M15 1 V8 H4" fill="none" stroke="#8a8a8a" stroke-width="1.8"/><path d="M1 8 L6 4 V12 Z" fill="#8a8a8a"/></svg>
<svg class="a" style="left:2093px;top:1310px" width="18" height="14" viewBox="0 0 18 14"><path d="M15 1 V8 H4" fill="none" stroke="#8a8a8a" stroke-width="1.8"/><path d="M1 8 L6 4 V12 Z" fill="#8a8a8a"/></svg>
<svg class="a" style="left:2093px;top:1367px" width="18" height="14" viewBox="0 0 18 14"><path d="M15 1 V8 H4" fill="none" stroke="#8a8a8a" stroke-width="1.8"/><path d="M1 8 L6 4 V12 Z" fill="#8a8a8a"/></svg>
<svg class="a" style="left:2093px;top:1426px" width="18" height="14" viewBox="0 0 18 14"><path d="M15 1 V8 H4" fill="none" stroke="#8a8a8a" stroke-width="1.8"/><path d="M1 8 L6 4 V12 Z" fill="#8a8a8a"/></svg>
<svg class="a" style="left:1690px;top:604px" width="142" height="8"><path d="M0 4 L3 2 L9 6 L15 2 L21 6 L27 2 L33 6 L39 2 L45 6 L51 2 L57 6 L63 2 L69 6 L75 2 L81 6 L87 2 L93 6 L99 2 L105 6 L111 2 L117 6 L123 2 L129 6 L135 2 L141 6" stroke="#d84040" stroke-width="1.3" fill="none"/></svg>
<div class="a" style="left:430px;top:1179px;width:1657px;height:2.5px;background:#262626"></div>
<div class="a" style="left:430px;top:1292px;width:1657px;height:2.5px;background:#262626"></div>
<div class="a" style="left:430px;top:1349px;width:1657px;height:2.5px;background:#262626"></div>
<div class="a" style="left:430px;top:1407px;width:1657px;height:2.5px;background:#262626"></div>
<div class="a" style="left:430px;top:1463px;width:1657px;height:2.5px;background:#262626"></div>
<div class="a" style="left:429.5px;top:1180px;width:2.5px;height:285px;background:#262626"></div>
<div class="a" style="left:2084px;top:1180px;width:2.5px;height:285px;background:#262626"></div>
<div class="a" style="left:710px;top:1293px;width:2.5px;height:172px;background:#262626"></div>
<svg class="a" style="left:1222px;top:855px" width="48" height="38" viewBox="0 0 48 38"><path d="M25 5 H43 M34 5 V32 M25 32 H44 M4 32 H18" stroke="#1a1a00" stroke-width="2.5" fill="none"/><path d="M6 31 L38 12" stroke="#1a1000" stroke-width="9" stroke-linecap="round"/><path d="M12 27 L36 13" stroke="#f4eee0" stroke-width="4" stroke-linecap="round"/></svg>
</div></div>
</div>
</body></html>
